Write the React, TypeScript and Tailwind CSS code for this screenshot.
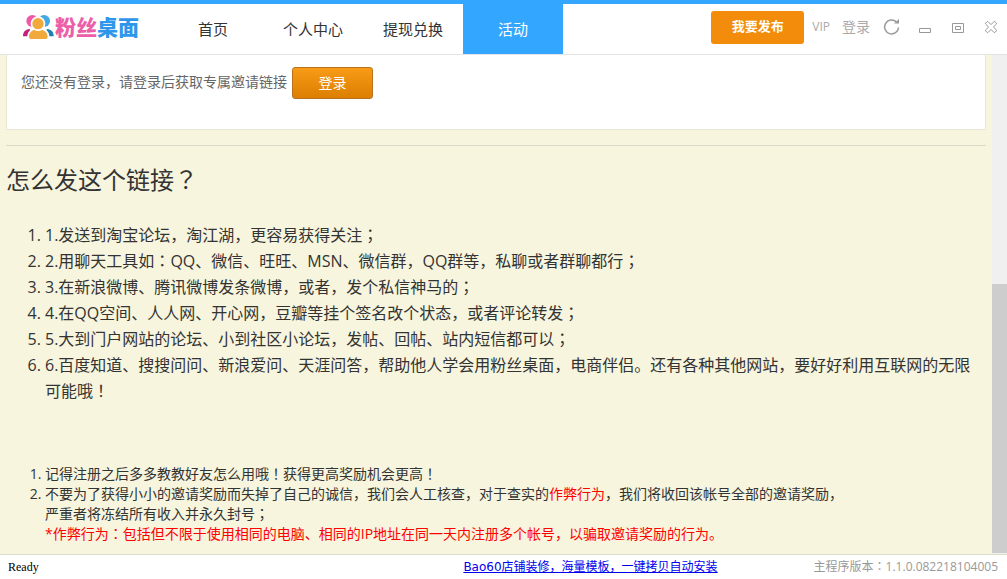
import { Fragment } from 'react'
import { clsx } from 'clsx'

const navItems = ['首页', '个人中心', '提现兑换', '活动']

const shareTips = [
  '1.发送到淘宝论坛，淘江湖，更容易获得关注；',
  '2.用聊天工具如：QQ、微信、旺旺、MSN、微信群，QQ群等，私聊或者群聊都行；',
  '3.在新浪微博、腾讯微博发条微博，或者，发个私信神马的；',
  '4.在QQ空间、人人网、开心网，豆瓣等挂个签名改个状态，或者评论转发；',
  '5.大到门户网站的论坛、小到社区小论坛，发帖、回帖、站内短信都可以；',
  '6.百度知道、搜搜问问、新浪爱问、天涯问答，帮助他人学会用粉丝桌面，电商伴侣。还有各种其他网站，要好好利用互联网的无限可能哦！',
]

// The SC font puts ：；！？ at the left of the cell, the JP one centers them
function Text({ children }: { children: string }) {
  return children.split(/([：；！？])/).map((part, i) =>
    i % 2 ? (
      <span key={i} lang="ja" className="leading-none font-['Noto_Sans_CJK_JP',sans-serif]">{part}</span>
    ) : (
      <Fragment key={i}>{part}</Fragment>
    )
  )
}

function Logo() {
  return (
    <a href="#" className="flex items-center w-[163px] shrink-0 pl-[23px] pb-1 gap-px">
      <svg width="31" height="26" viewBox="0 0 93 78" aria-hidden="true">
        <circle cx="28" cy="21" r="18" fill="#ee5aa5" />
        <circle cx="63" cy="21" r="18" fill="#45a8e6" />
        <path d="M0 67C0 54 6 47 20 45L30 67Z" fill="#c4207c" />
        <path d="M92 67C92 54 86 47 72 45L62 67Z" fill="#1d7fb4" />
        <circle cx="45" cy="29" r="22" fill="#fff" />
        <path d="M13 78V68C13 54 22 46 34 43H58C70 46 79 54 79 68V78Z" fill="#fff" />
        <circle cx="45" cy="29" r="17" fill="#f0a93a" />
        <path d="M18 69C18 57 25 50 34 48Q45 54 57 48C66 50 74 57 74 69Q74 75 68 75H24Q18 75 18 69Z" fill="#f0a93a" />
      </svg>
      <span className="text-[21px] leading-6 font-black whitespace-nowrap text-[#ec5fa8]">
        粉丝<span className="text-[#2f97ea]">桌面</span>
      </span>
    </a>
  )
}

function WindowControls() {
  const btn = 'w-[18px] h-[18px] flex items-center justify-center'
  return (
    <div className="flex items-center gap-[15px] text-[#999]">
      <button aria-label="刷新" className={btn}>
        <svg width="18" height="18" viewBox="0 0 18 18" fill="none" stroke="currentColor" strokeWidth="1.5">
          <path d="M15.6 9.5A7 7 0 1 1 13.2 3.6" />
          <path d="M11 5.5H16V1Z" fill="currentColor" stroke="none" />
        </svg>
      </button>
      <button aria-label="最小化" className={btn}>
        <svg width="18" height="18" viewBox="0 0 18 18" fill="none" stroke="currentColor">
          <path d="M3.5 10.5h11v4h-11z" />
        </svg>
      </button>
      <button aria-label="最大化" className={btn}>
        <svg width="18" height="18" viewBox="0 0 18 18" fill="none" stroke="currentColor">
          <path d="M3.5 5.5h11v9h-11zM6.5 8.5h5v3h-5z" />
        </svg>
      </button>
      <button aria-label="关闭" className={btn}>
        <svg width="18" height="18" viewBox="0 0 18 18" fill="none" stroke="currentColor" strokeLinejoin="round">
          <path d="M3.5 5.2L5.2 3.5H6L9 6.6L12 3.5H12.8L14.5 5.2V6L11.4 9L14.5 12V12.8L12.8 14.5H12L9 11.4L6 14.5H5.2L3.5 12.8V12L6.6 9L3.5 6Z" />
        </svg>
      </button>
    </div>
  )
}

function Header() {
  return (
    <header className="flex h-[55px] shrink-0 bg-white border-t-4 border-t-[#33a7ff] border-b border-b-[#e4e4e4]">
      <Logo />
      <nav className="flex">
        {navItems.map((item) => (
          <a
            key={item}
            href="#"
            className={clsx(
              'w-[100px] flex items-center justify-center text-[15px]',
              item === '活动' ? 'bg-[#33a7ff] text-white' : 'text-[#333]'
            )}
          >
            {item}
          </a>
        ))}
      </nav>
      <div className="ml-auto flex items-center pr-[7px] pb-1">
        <button className="w-[93px] h-[33px] rounded-[3px] bg-[#f28c0a] text-white text-[13px] font-bold">我要发布</button>
        <a href="#" className="ml-2 text-xs text-[#aaa]">VIP</a>
        <a href="#" className="ml-3 mr-[13px] text-sm text-[#aaa]">登录</a>
        <WindowControls />
      </div>
    </header>
  )
}

export default function App() {
  return (
    <div className="h-screen flex flex-col bg-white text-[#333] font-['Open_Sans','Noto_Sans_CJK_SC',sans-serif]">
      <Header />

      <div className="flex flex-1 min-h-0">
        <main className="flex-1 min-w-0 overflow-hidden bg-[#f7f5dd] px-1.5">
          <section className="flex items-start h-[75px] pt-3 pl-3.5 bg-white border border-t-0 border-[#e8e6d4] text-sm text-[#666]">
            <p className="leading-[30px]">您还没有登录，请登录后获取专属邀请链接</p>
            <button className="ml-[5px] w-[81px] h-8 rounded-[3px] border border-[#b8731a] bg-linear-to-b from-[#f89b16] to-[#dc7f02] text-sm text-white">
              登录
            </button>
          </section>

          <hr className="mt-[15px] border-[#dbdac8]" />

          <h1 className="mt-4 text-2xl leading-9">
            <Text>怎么发这个链接？</Text>
          </h1>

          <ol className="mt-6 pl-[39px] list-decimal text-base leading-[26px]">
            {shareTips.map((tip) => (
              <li key={tip}>
                <Text>{tip}</Text>
              </li>
            ))}
          </ol>

          <ol className="mt-[60px] pl-[39px] list-decimal text-sm leading-5">
            <li>
              <Text>记得注册之后多多教教好友怎么用哦！获得更高奖励机会更高！</Text>
            </li>
            <li>
              不要为了获得小小的邀请奖励而失掉了自己的诚信，我们会人工核查，对于查实的
              <span className="text-[#f00]">作弊行为</span>，我们将收回该帐号全部的邀请奖励，
              <br />
              <Text>严重者将冻结所有收入并永久封号；</Text>
              <p className="text-[#f00]">
                <Text>*作弊行为：包括但不限于使用相同的电脑、相同的IP地址在同一天内注册多个帐号，以骗取邀请奖励的行为。</Text>
              </p>
            </li>
          </ol>
        </main>

        {/* Scrollbar */}
        <div className="w-[15px] shrink-0 flex flex-col justify-end pb-px bg-[#f0f0f0]">
          <div className="h-[54%] bg-[#cdcdcd]" />
        </div>
      </div>

      <footer className="flex items-center h-[25px] shrink-0 pl-2 pr-[9px] border-t border-[#dddccb] text-xs">
        <span className="font-['Liberation_Serif',serif] text-black">Ready</span>
        <a href="#" className="ml-auto font-['DejaVu_Sans','Noto_Sans_CJK_SC',sans-serif] underline text-[#00e]">
          Bao60店铺装修，海量模板，一键拷贝自动安装
        </a>
        <span className="ml-24 text-[#999]">
          <Text>主程序版本：1.1.0.082218104005</Text>
        </span>
      </footer>
    </div>
  )
}
